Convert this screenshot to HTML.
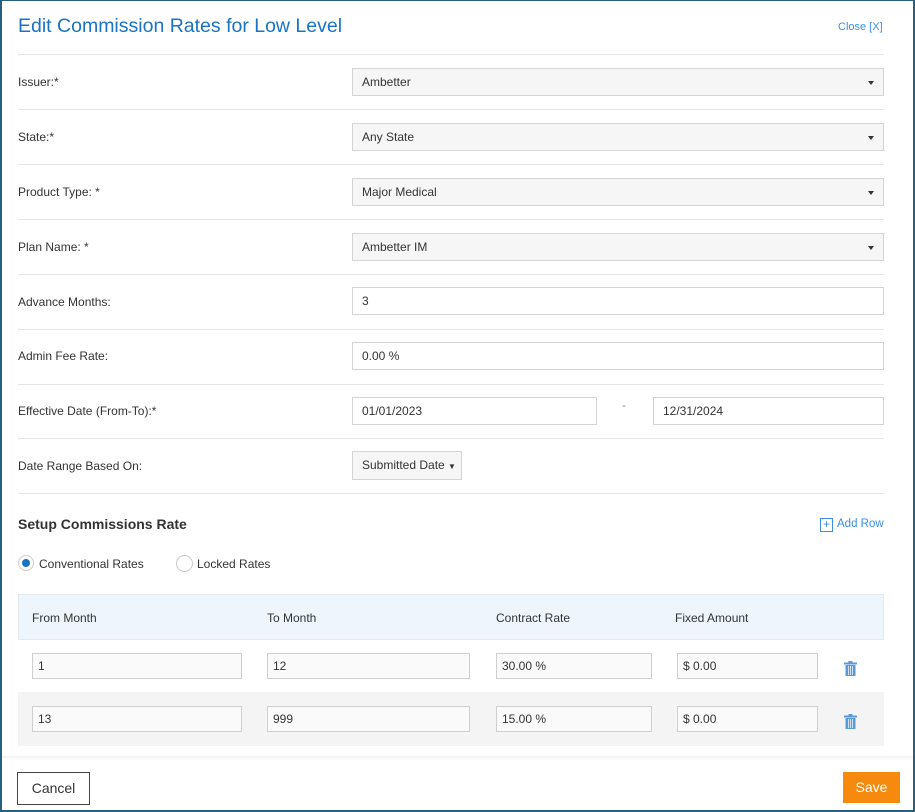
<!DOCTYPE html>
<html><head><meta charset="utf-8"><style>
*{box-sizing:border-box;margin:0;padding:0}
body{width:915px;height:812px;background:#fff;font-family:"Liberation Sans",sans-serif;font-size:12px;color:#333;position:relative;overflow:hidden}
.frame{position:absolute;left:0;top:0;width:915px;height:812px;border:2px solid #25607f;border-top-width:1px}
.a{position:absolute}
.line{position:absolute;left:18px;width:866px;height:1px;background:#e6e6e6}
.lbl{position:absolute;left:18px;font-size:12px;color:#333}
.sel{position:absolute;left:352px;width:532px;height:28px;border:1px solid #d4d4d4;background:#f6f6f6;padding:0 9px;line-height:26px;font-size:12px}
.sel:after{content:"";position:absolute;right:9px;top:12px;border-left:3px solid transparent;border-right:3px solid transparent;border-top:4px solid #333}
.inp{position:absolute;height:28px;border:1px solid #d4d4d4;background:#fff;padding:0 9px;line-height:26px;font-size:12px}
.tin{position:absolute;height:26px;border:1px solid #cfcfcf;background:#fafafa;padding:0 5px;line-height:24px;font-size:12px}
.th{position:absolute;top:611px;font-size:12px}
.trash{position:absolute;left:844px;width:13px;height:15px}
</style></head><body>
<div class="a" style="left:18px;top:15px;font-size:19.5px;color:#1a73c4">Edit Commission Rates for Low Level</div>
<div class="a" style="left:838px;top:21px;font-size:11px;color:#3d8fe0">Close [X]</div>
<div class="line" style="top:54px"></div>
<div class="lbl" style="top:75px">Issuer:*</div><div class="sel" style="top:68px">Ambetter</div>
<div class="line" style="top:109px"></div>
<div class="lbl" style="top:130px">State:*</div><div class="sel" style="top:123px">Any State</div>
<div class="line" style="top:164px"></div>
<div class="lbl" style="top:185px">Product Type: *</div><div class="sel" style="top:178px">Major Medical</div>
<div class="line" style="top:219px"></div>
<div class="lbl" style="top:240px">Plan Name: *</div><div class="sel" style="top:233px">Ambetter IM</div>
<div class="line" style="top:274px"></div>
<div class="lbl" style="top:295px">Advance Months:</div><div class="inp" style="left:352px;top:287px;width:532px">3</div>
<div class="line" style="top:329px"></div>
<div class="lbl" style="top:349px">Admin Fee Rate:</div><div class="inp" style="left:352px;top:342px;width:532px">0.00 %</div>
<div class="line" style="top:384px"></div>
<div class="lbl" style="top:404px">Effective Date (From-To):*</div>
<div class="inp" style="left:352px;top:397px;width:245px">01/01/2023</div>
<div class="a" style="left:622px;top:398px;color:#888">-</div>
<div class="inp" style="left:653px;top:397px;width:231px">12/31/2024</div>
<div class="line" style="top:438px"></div>
<div class="lbl" style="top:459px">Date Range Based On:</div>
<div class="a" style="left:352px;top:451px;width:110px;height:29px;border:1px solid #d4d4d4;background:#f6f6f6;line-height:27px;padding-left:9px">Submitted Date <span style="font-size:8px">▼</span></div>
<div class="line" style="top:493px"></div>
<div class="a" style="left:18px;top:516px;font-size:14px;font-weight:bold;color:#333">Setup Commissions Rate</div>
<div class="a" style="left:820px;top:518px;width:13px;height:14px;border:1px solid #3d8fe0;color:#3d8fe0;font-size:12px;line-height:11px;text-align:center">+</div>
<div class="a" style="left:837px;top:518px;font-size:11.5px;color:#3d8fe0">Add Row</div>
<div class="a" style="left:18px;top:555px;width:16px;height:16px;border-radius:50%;border:1px solid #ccc;background:#fff"><div style="position:absolute;left:3px;top:3px;width:8px;height:8px;border-radius:50%;background:#1a73c4"></div></div>
<div class="a" style="left:39px;top:557px">Conventional Rates</div>
<div class="a" style="left:176px;top:555px;width:17px;height:17px;border-radius:50%;border:1px solid #ccc"></div>
<div class="a" style="left:197px;top:557px">Locked Rates</div>
<div class="a" style="left:18px;top:594px;width:866px;height:46px;background:#eef5fd;border:1px solid #e2ebf4"></div>
<div class="th" style="left:32px">From Month</div><div class="th" style="left:267px">To Month</div><div class="th" style="left:496px">Contract Rate</div><div class="th" style="left:675px">Fixed Amount</div>
<div class="a" style="left:18px;top:692px;width:866px;height:54px;background:#f4f4f4"></div>
<div class="tin" style="left:32px;top:653px;width:210px">1</div>
<div class="tin" style="left:267px;top:653px;width:203px">12</div>
<div class="tin" style="left:496px;top:653px;width:156px">30.00 %</div>
<div class="tin" style="left:677px;top:653px;width:141px">$ 0.00</div>
<div class="tin" style="left:32px;top:706px;width:210px">13</div>
<div class="tin" style="left:267px;top:706px;width:203px">999</div>
<div class="tin" style="left:496px;top:706px;width:156px">15.00 %</div>
<div class="tin" style="left:677px;top:706px;width:141px">$ 0.00</div>
<svg class="trash" style="top:661px" viewBox="0 0 13 15"><rect x="0" y="1.5" width="13" height="2" fill="#5a9ad6"/><rect x="4.5" y="0" width="4" height="2" fill="#5a9ad6"/><rect x="1.5" y="4" width="10" height="11" fill="#5a9ad6"/><rect x="4" y="5" width="1" height="9" fill="#cfe2f5"/><rect x="6" y="5" width="1" height="9" fill="#cfe2f5"/><rect x="8" y="5" width="1" height="9" fill="#cfe2f5"/></svg>
<svg class="trash" style="top:714px" viewBox="0 0 13 15"><rect x="0" y="1.5" width="13" height="2" fill="#5a9ad6"/><rect x="4.5" y="0" width="4" height="2" fill="#5a9ad6"/><rect x="1.5" y="4" width="10" height="11" fill="#5a9ad6"/><rect x="4" y="5" width="1" height="9" fill="#cfe2f5"/><rect x="6" y="5" width="1" height="9" fill="#cfe2f5"/><rect x="8" y="5" width="1" height="9" fill="#cfe2f5"/></svg>
<div class="a" style="left:0;top:756px;width:915px;height:4px;background:linear-gradient(#f3f3f3,#fff)"></div>
<div class="a" style="left:17px;top:772px;width:73px;height:33px;border:1px solid #444;background:#fff;font-size:14px;line-height:31px;text-align:center;color:#333">Cancel</div>
<div class="a" style="left:843px;top:772px;width:57px;height:31px;background:#f68a0e;color:#fff;font-size:14px;line-height:31px;text-align:center">Save</div>
<div class="frame"></div>
</body></html>
